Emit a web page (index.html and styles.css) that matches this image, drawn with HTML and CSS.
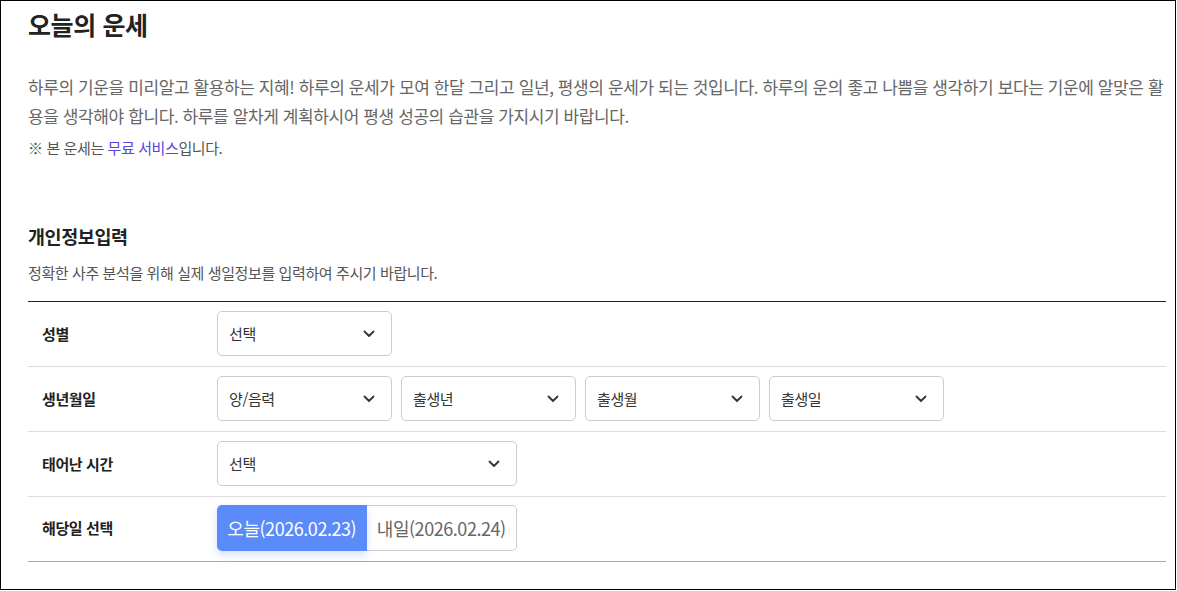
FILE: index.html
```html
<!DOCTYPE html>
<html lang="ko">
<head>
<meta charset="utf-8">
<title>오늘의 운세</title>
<link rel="stylesheet" href="styles.css">
</head>
<body>
<div class="page">
  <h1 class="title">오늘의 운세</h1>
  <p class="intro">하루의 기운을 미리알고 활용하는 지혜! 하루의 운세가 모여 한달 그리고 일년, 평생의 운세가 되는 것입니다. 하루의 운의 좋고 나쁨을 생각하기 보다는 기운에 알맞은 활용을 생각해야 합니다. 하루를 알차게 계획하시어 평생 성공의 습관을 가지시기 바랍니다.</p>
  <p class="note">※ 본 운세는 <a class="link" href="#">무료 서비스</a>입니다.</p>

  <section class="info">
    <h2 class="info-title">개인정보입력</h2>
    <p class="info-sub">정확한 사주 분석을 위해 실제 생일정보를 입력하여 주시기 바랍니다.</p>

    <div class="form">
      <div class="row">
        <div class="label">성별</div>
        <div class="fields">
          <div class="select"><span>선택</span><svg class="chev" width="12" height="8" viewBox="0 0 12 8"><path d="M1.5 1.5 6 6l4.5-4.5" fill="none" stroke="#333" stroke-width="1.8" stroke-linecap="round" stroke-linejoin="round"/></svg></div>
        </div>
      </div>
      <div class="row">
        <div class="label">생년월일</div>
        <div class="fields">
          <div class="select"><span>양/음력</span><svg class="chev" width="12" height="8" viewBox="0 0 12 8"><path d="M1.5 1.5 6 6l4.5-4.5" fill="none" stroke="#333" stroke-width="1.8" stroke-linecap="round" stroke-linejoin="round"/></svg></div>
          <div class="select"><span>출생년</span><svg class="chev" width="12" height="8" viewBox="0 0 12 8"><path d="M1.5 1.5 6 6l4.5-4.5" fill="none" stroke="#333" stroke-width="1.8" stroke-linecap="round" stroke-linejoin="round"/></svg></div>
          <div class="select"><span>출생월</span><svg class="chev" width="12" height="8" viewBox="0 0 12 8"><path d="M1.5 1.5 6 6l4.5-4.5" fill="none" stroke="#333" stroke-width="1.8" stroke-linecap="round" stroke-linejoin="round"/></svg></div>
          <div class="select"><span>출생일</span><svg class="chev" width="12" height="8" viewBox="0 0 12 8"><path d="M1.5 1.5 6 6l4.5-4.5" fill="none" stroke="#333" stroke-width="1.8" stroke-linecap="round" stroke-linejoin="round"/></svg></div>
        </div>
      </div>
      <div class="row">
        <div class="label">태어난 시간</div>
        <div class="fields">
          <div class="select select-wide"><span>선택</span><svg class="chev" width="12" height="8" viewBox="0 0 12 8"><path d="M1.5 1.5 6 6l4.5-4.5" fill="none" stroke="#333" stroke-width="1.8" stroke-linecap="round" stroke-linejoin="round"/></svg></div>
        </div>
      </div>
      <div class="row row-date">
        <div class="label">해당일 선택</div>
        <div class="fields">
          <div class="toggle">
            <button class="opt opt-active" type="button">오늘(2026.02.23)</button>
            <button class="opt" type="button">내일(2026.02.24)</button>
          </div>
        </div>
      </div>
    </div>
  </section>
</div>
</body>
</html>
```

FILE: styles.css
```css
* {
  box-sizing: border-box;
}

html, body {
  margin: 0;
  padding: 0;
  background: #fff;
}

body {
  font-family: "Noto Sans CJK KR", "Noto Sans", sans-serif;
  letter-spacing: -0.025em;
  color: #222;
}

.page {
  width: 1176px;
  height: 590px;
  border: 1px solid #000;
  padding: 5px 9px 0 27px;
  overflow: hidden;
}

.title {
  margin: 0;
  font-size: 25px;
  line-height: 36px;
  font-weight: 700;
  color: #222;
}

.intro {
  margin: 30px 0 0;
  font-size: 17px;
  line-height: 29px;
  color: #666;
}

.note {
  margin: 8px 0 0;
  font-size: 15px;
  line-height: 20px;
  color: #555;
}

.link {
  color: #5b44d8;
  text-decoration: none;
}

.info {
  margin-top: 65px;
}

.info-title {
  margin: 0;
  font-size: 18.5px;
  line-height: 26px;
  font-weight: 700;
  color: #222;
}

.info-sub {
  margin: 14px 0 0;
  font-size: 15px;
  line-height: 20px;
  color: #555;
}

.form {
  margin-top: 18px;
  border-top: 1px solid #222;
  border-bottom: 1px solid #aaa;
}

.row {
  display: flex;
  align-items: flex-start;
  height: 65px;
  padding-top: 9px;
  border-bottom: 1px solid #ddd;
}

.row:last-child {
  border-bottom: 0;
  height: 64px;
}

.row-date {
  padding-top: 8px;
}

.label {
  width: 189px;
  padding-left: 14px;
  font-size: 15px;
  line-height: 45px;
  font-weight: 700;
  color: #222;
}

.row-date .label {
  line-height: 46px;
}

.fields {
  display: flex;
  gap: 9px;
}

.select {
  display: flex;
  align-items: center;
  justify-content: space-between;
  width: 175px;
  height: 45px;
  padding: 0 16px 0 11px;
  border: 1px solid #ccc;
  border-radius: 5px;
  background: #fff;
  font-size: 15px;
  color: #333;
}

.select-wide {
  width: 300px;
}

.chev {
  display: block;
}

.toggle {
  display: flex;
  width: 300px;
  height: 46px;
}

.opt {
  flex: 1;
  margin: 0;
  padding: 0;
  font-family: inherit;
  letter-spacing: -0.025em;
  font-size: 18px;
  color: #666;
  background: #fff;
  border: 1px solid #ccc;
  border-left: 0;
  border-radius: 0 5px 5px 0;
  cursor: pointer;
}

.opt-active {
  color: #fff;
  background: #5b8af9;
  border: 0;
  border-radius: 5px 0 0 5px;
  box-shadow: 0 4px 8px rgba(91, 138, 249, 0.25);
  position: relative;
  z-index: 1;
}
```
